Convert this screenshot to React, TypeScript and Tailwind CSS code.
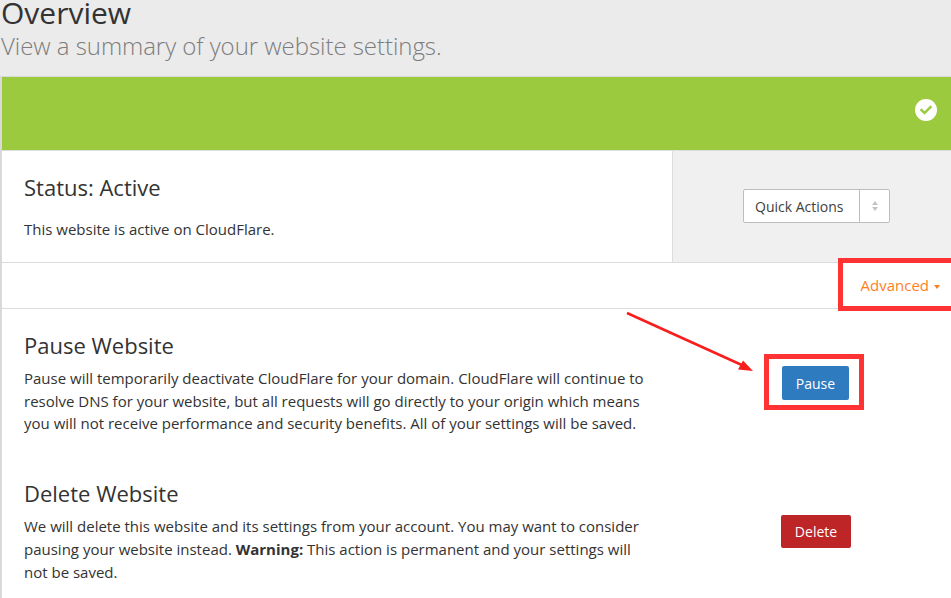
import React from 'react';
import { FaCheck } from 'react-icons/fa';

const font = "font-['Open_Sans',sans-serif]";

export default function App() {
  return (
    <div className={`${font} relative h-[598px] w-[951px] overflow-hidden bg-[#ebebeb] text-[#333333]`}>
      {/* Page title */}
      <div className="flex h-[76px] flex-col pl-px">
        <h1 className="-mt-[5px] text-[30px] leading-[36px] text-[#333333]">Overview</h1>
        <p className="text-[24px] leading-[30px] font-light tracking-[-0.05px] text-[#7d7d7d]">View a summary of your website settings.</p>
      </div>

      <div className="h-[522px] border-t border-l-2 border-[#d9d9d9] bg-white">
        {/* Green status bar */}
        <div className="flex h-[73px] items-center justify-end bg-[#9bca3e] pb-[7px] pr-[14px]">
          <span className="flex h-[22px] w-[22px] items-center justify-center rounded-full bg-white">
            <FaCheck className="h-[12px] w-[12px] text-[#9bca3e]" />
          </span>
        </div>

        {/* Status row */}
        <div className="flex h-[113px] border-t border-b border-[#dddddd]">
          <div className="flex-1 pl-[22px] pt-[22px]">
            <h2 className="text-[22px] leading-[28px]">Status: Active</h2>
            <p className="mt-[18px] text-[15px] leading-[20px]">This website is active on CloudFlare.</p>
          </div>
          <div className="flex w-[279px] items-center justify-center border-l border-[#dddddd] bg-[#f0f0f0] pb-[2px] pl-[9px]">
            <div className="flex h-[34px] w-[147px] rounded-[2px] border border-[#bdbdbd] bg-white">
              <span className="flex-1 pl-[11px] text-[14px] leading-[33px] text-[#404040]">Quick Actions</span>
              <span className="flex w-[30px] flex-col items-center justify-center gap-[2px] border-l border-[#bdbdbd]">
                <span className="h-0 w-0 border-x-[3.5px] border-b-[4px] border-x-transparent border-b-[#c4c4c4]" />
                <span className="h-0 w-0 border-x-[3.5px] border-t-[4px] border-x-transparent border-t-[#c4c4c4]" />
              </span>
            </div>
          </div>
        </div>

        {/* Advanced toggle */}
        <div className="flex h-[46px] items-center justify-end gap-[5px] border-b border-[#dddddd] pr-[11px] text-[15px] text-[#ff7f1f]">
          <span>Advanced</span>
          <span className="mt-[2px] h-0 w-0 border-x-[3.5px] border-t-[4px] border-x-transparent border-t-[#ff7f1f]" />
        </div>

        {/* Pause */}
        <div className="flex h-[148px]">
          <div className="w-[648px] pl-[22px] pt-[22px]">
            <h2 className="text-[22px] leading-[28px]">Pause Website</h2>
            <p className="mt-[8px] text-[15px] leading-[22.5px]">
              Pause will temporarily deactivate CloudFlare for your domain. CloudFlare will continue to resolve DNS for your website, but all requests will go directly to your origin which means you will not receive performance and security benefits. All of your settings will be saved.
            </p>
          </div>
          <div className="flex-1 pl-[132px] pt-[57px]">
            <button className="h-[34px] w-[67px] rounded-[2px] bg-[#2f7bbf] text-[14px] font-medium text-white">Pause</button>
          </div>
        </div>

        {/* Delete */}
        <div className="flex">
          <div className="w-[648px] pl-[22px] pt-[22px]">
            <h2 className="text-[22px] leading-[28px]">Delete Website</h2>
            <p className="mt-[8px] text-[15px] leading-[23px]">
              We will delete this website and its settings from your account. You may want to consider pausing your website instead. <strong className="font-bold">Warning:</strong> This action is permanent and your settings will not be saved.
            </p>
          </div>
          <div className="flex-1 pl-[131px] pt-[58px]">
            <button className="h-[33px] w-[70px] rounded-[2px] bg-[#bd2527] text-[14px] font-medium text-white">Delete</button>
          </div>
        </div>
      </div>

      {/* Screenshot annotations */}
      <div className="absolute left-[838px] top-[258px] h-[53px] w-[120px] border-[5px] border-[#ff3333]" />
      <div className="absolute left-[764px] top-[354px] h-[56px] w-[100px] border-[5px] border-[#ff3333]" />
      <svg className="absolute left-[620px] top-[306px]" width="140" height="72" viewBox="0 0 140 72">
        <line x1="7" y1="7" x2="124" y2="60" stroke="#f81e1e" strokeWidth="2.5" />
        <polygon points="133,65 118,63.5 123,54.5" fill="#f81e1e" />
      </svg>
    </div>
  );
}
